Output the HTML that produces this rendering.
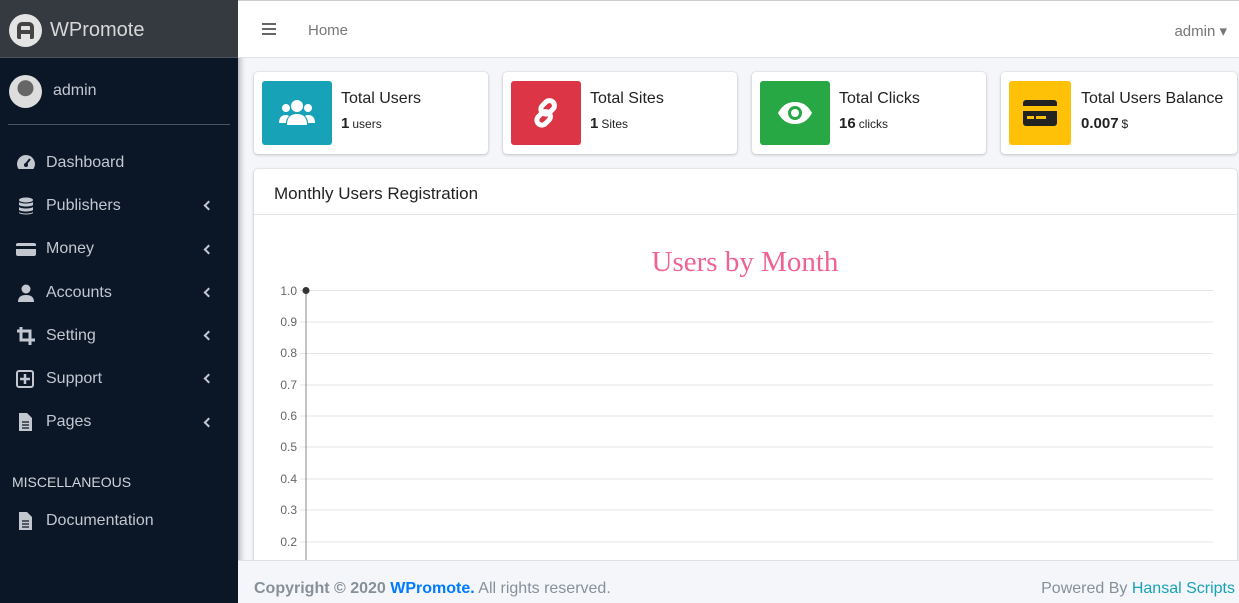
<!DOCTYPE html><html><head><style>
*{box-sizing:border-box;margin:0;padding:0}
body{width:1239px;height:603px;overflow:hidden;font-family:"Liberation Sans",sans-serif;background:#f4f6f9;position:relative}
.sb{position:absolute;left:0;top:0;width:238px;height:603px;background:#0b1727;box-shadow:2px 0 6px rgba(0,0,0,.3)}
.brand{height:58px;background:#343a40;border-bottom:1px solid #4b545c;display:flex;align-items:center;padding-left:9px;padding-top:3px;color:#d8d8d8;font-size:20px}
.logo{width:33px;height:33px;border-radius:50%;background:#e4e4e4;margin-right:8px;display:flex;align-items:center;justify-content:center}
.user{height:67px;margin:0 8px;border-bottom:1px solid #4b545c;display:flex;align-items:center;padding-left:1px;color:#c2c7d0;font-size:16px}
.av{width:33px;height:33px;border-radius:50%;background:radial-gradient(circle at 50% 40%,#666 0 30%,#ddd 32%);margin-right:11px}
.nav{margin-top:16px}
.it{height:43.3px;display:flex;align-items:center;padding-left:16px;color:#c2c7d0;font-size:16px;position:relative}
.it svg{margin-right:10px;width:20px;height:18px}
.it b{position:absolute;right:26px;top:18px;width:7px;height:7px;border-left:2px solid #c2c7d0;border-bottom:2px solid #c2c7d0;transform:rotate(45deg)}
.hd{position:absolute;left:12px;top:474px;color:#d0d4da;font-size:14px}
.top{position:absolute;left:238px;top:0;right:0;height:58px;background:#fff;border-bottom:1px solid #dee2e6;border-top:1px solid #ccc;color:#777;font-size:15px}
.card{position:absolute;top:72px;height:82px;background:#fff;border-radius:4px;box-shadow:0 0 1px rgba(0,0,0,.2),0 1px 3px rgba(0,0,0,.2)}
.ic{position:absolute;left:8px;top:9px;width:70px;height:64px;border-radius:3px;display:flex;align-items:center;justify-content:center}
.t1{position:absolute;left:87px;top:18px;font-size:16px;color:#222}
.t2{position:absolute;left:87px;top:43px;font-size:12px;color:#222}
.t2 b{font-size:15px;margin-right:3px}
.chart{position:absolute;left:254px;top:169px;width:983px;height:400px;background:#fff;border-radius:4px;box-shadow:0 0 1px rgba(0,0,0,.2),0 1px 3px rgba(0,0,0,.2)}
.ch{height:46px;border-bottom:1px solid #e5e5e5;padding:15px 20px;font-size:17px;color:#222}
.foot{position:absolute;left:238px;top:560px;right:0;height:43px;background:#f4f6f9;border-top:1px solid #dee2e6;font-size:16px;color:#869099}
</style></head><body>
<div class="sb">
<div class="brand"><div class="logo"><div style="width:17px;height:17px;border:4px solid #444;border-radius:5px 5px 2px 2px;border-bottom:none;position:relative"><div style="position:absolute;left:0;right:0;top:4px;height:4px;background:#444"></div></div></div>WPromote</div>
<div class="user"><div class="av"></div>admin</div>
<div class="nav">
<div class="it"><svg viewBox="0 0 20 18" fill="#c2c7d0"><path d="M10 1a9 9 0 0 0-9 9c0 2 .6 3.6 1.6 5h14.8A9 9 0 0 0 10 1z"/><path d="M10 10l4-5" stroke="#0b1727" stroke-width="2"/><circle cx="10" cy="11" r="2" fill="#0b1727"/></svg>Dashboard</div>
<div class="it"><svg viewBox="0 0 20 18" fill="#c2c7d0"><ellipse cx="10" cy="3" rx="7" ry="2.5"/><path d="M3 5c2 2 12 2 14 0v3c-2 2-12 2-14 0zM3 10c2 2 12 2 14 0v3c-2 2-12 2-14 0zM3 15c2 2 12 2 14 0v1c-2 2-12 2-14 0z"/></svg>Publishers<b></b></div>
<div class="it"><svg viewBox="0 0 20 18" fill="#c2c7d0"><rect x="0" y="3" width="20" height="13" rx="2"/><rect x="0" y="6" width="20" height="3" fill="#0b1727"/></svg>Money<b></b></div>
<div class="it"><svg viewBox="0 0 20 18" fill="#c2c7d0"><circle cx="10" cy="5" r="4.5"/><path d="M2 18c0-5 3-7 8-7s8 2 8 7z"/></svg>Accounts<b></b></div>
<div class="it"><svg viewBox="0 0 20 18" fill="none" stroke="#c2c7d0" stroke-width="3"><path d="M5 0v13h14M1 4h13v14"/></svg>Setting<b></b></div>
<div class="it"><svg viewBox="0 0 20 18"><rect x="1" y="1" width="16" height="16" rx="2" fill="none" stroke="#c2c7d0" stroke-width="2"/><path d="M9 4v10M4 9h10" stroke="#c2c7d0" stroke-width="2.5"/></svg>Support<b></b></div>
<div class="it"><svg viewBox="0 0 20 18" fill="#c2c7d0"><path d="M3 0h8l5 5v13H3z"/><path d="M6 9h7M6 12h7M6 15h7" stroke="#0b1727" stroke-width="1.3"/></svg>Pages<b></b></div>
</div>
<div class="hd">MISCELLANEOUS</div>
<div class="it" style="position:absolute;top:499px;width:238px"><svg viewBox="0 0 20 18" fill="#c2c7d0"><path d="M3 0h8l5 5v13H3z"/><path d="M6 9h7M6 12h7M6 15h7" stroke="#0b1727" stroke-width="1.3"/></svg>Documentation</div>
</div>
<div class="top">
<div style="position:absolute;left:24px;top:22px;width:14px;height:12px;border-top:2px solid #666;border-bottom:2px solid #666"><div style="margin-top:3px;height:2px;background:#666"></div></div>
<div style="position:absolute;left:70px;top:21px">Home</div>
<div style="position:absolute;right:12px;top:21px">admin &#9662;</div>
</div>
<div class="card" style="left:254px;width:234px"><div class="ic" style="background:#17a2b8"><svg width="38" height="28" viewBox="0 0 38 28" fill="#fff"><circle cx="19" cy="7" r="6"/><circle cx="8" cy="9" r="4"/><circle cx="30" cy="9" r="4"/><path d="M9 26c0-8 4-11 10-11s10 3 10 11z"/><path d="M1 24c0-6 3-8 7-8 2 0 3 1 3 1-2 2-3 4-3 7z"/><path d="M37 24c0-6-3-8-7-8-2 0-3 1-3 1 2 2 3 4 3 7z"/></svg></div><div class="t1">Total Users</div><div class="t2"><b>1</b>users</div></div>
<div class="card" style="left:503px;width:234px"><div class="ic" style="background:#dc3545"><svg width="32" height="32" viewBox="0 0 32 32" fill="none" stroke="#fff" stroke-width="5"><rect x="13" y="3" width="10" height="15" rx="5" transform="rotate(45 18 10)"/><rect x="9" y="14" width="10" height="15" rx="5" transform="rotate(45 14 21)"/></svg></div><div class="t1">Total Sites</div><div class="t2"><b>1</b>Sites</div></div>
<div class="card" style="left:752px;width:234px"><div class="ic" style="background:#28a745"><svg width="36" height="24" viewBox="0 0 36 24"><path d="M1 12C6 3 12 1 18 1s12 2 17 11c-5 9-11 11-17 11S6 21 1 12z" fill="#fff"/><circle cx="18" cy="12" r="7" fill="#28a745"/><circle cx="18" cy="12" r="4" fill="#fff"/></svg></div><div class="t1">Total Clicks</div><div class="t2"><b>16</b>clicks</div></div>
<div class="card" style="left:1001px;width:236px"><div class="ic" style="background:#ffc107;width:62px"><svg width="34" height="26" viewBox="0 0 34 26"><rect x="0" y="0" width="34" height="26" rx="3" fill="#222"/><rect x="0" y="6" width="34" height="5" fill="#ffc107"/><rect x="4" y="16" width="7" height="3" fill="#ffc107"/><rect x="13" y="16" width="10" height="3" fill="#ffc107"/></svg></div><div class="t1" style="left:80px">Total Users Balance</div><div class="t2" style="left:80px"><b>0.007</b>$</div></div>
<div class="chart"><div class="ch">Monthly Users Registration</div>
<svg width="983" height="354" style="position:absolute;left:0;top:46px" font-family="Liberation Sans" font-size="12" fill="#666">
<text x="491" y="56" font-family="Liberation Serif" font-size="29" fill="#f06292" text-anchor="middle">Users by Month</text>
<g stroke="#e5e5e5"><line x1="46" x2="959" y1="75.5" y2="75.5"/><line x1="46" x2="959" y1="107" y2="107"/><line x1="46" x2="959" y1="138.5" y2="138.5"/><line x1="46" x2="959" y1="170" y2="170"/><line x1="46" x2="959" y1="201" y2="201"/><line x1="46" x2="959" y1="232" y2="232"/><line x1="46" x2="959" y1="264" y2="264"/><line x1="46" x2="959" y1="295" y2="295"/><line x1="46" x2="959" y1="327" y2="327"/></g>
<line x1="52" x2="52" y1="75" y2="354" stroke="#888"/>
<g text-anchor="end"><text x="43" y="80">1.0</text><text x="43" y="111">0.9</text><text x="43" y="142">0.8</text><text x="43" y="174">0.7</text><text x="43" y="205">0.6</text><text x="43" y="236">0.5</text><text x="43" y="268">0.4</text><text x="43" y="299">0.3</text><text x="43" y="331">0.2</text></g>
<circle cx="52" cy="75.5" r="3.5" fill="#333"/>
</svg></div>
<div class="foot"><div style="position:absolute;left:16px;top:19px"><b style="color:#869099">Copyright © 2020 <span style="color:#007bff">WPromote.</span></b> All rights reserved.</div><div style="position:absolute;right:4px;top:19px">Powered By <span style="color:#17a2b8">Hansal Scripts</span></div></div>
</body></html>
